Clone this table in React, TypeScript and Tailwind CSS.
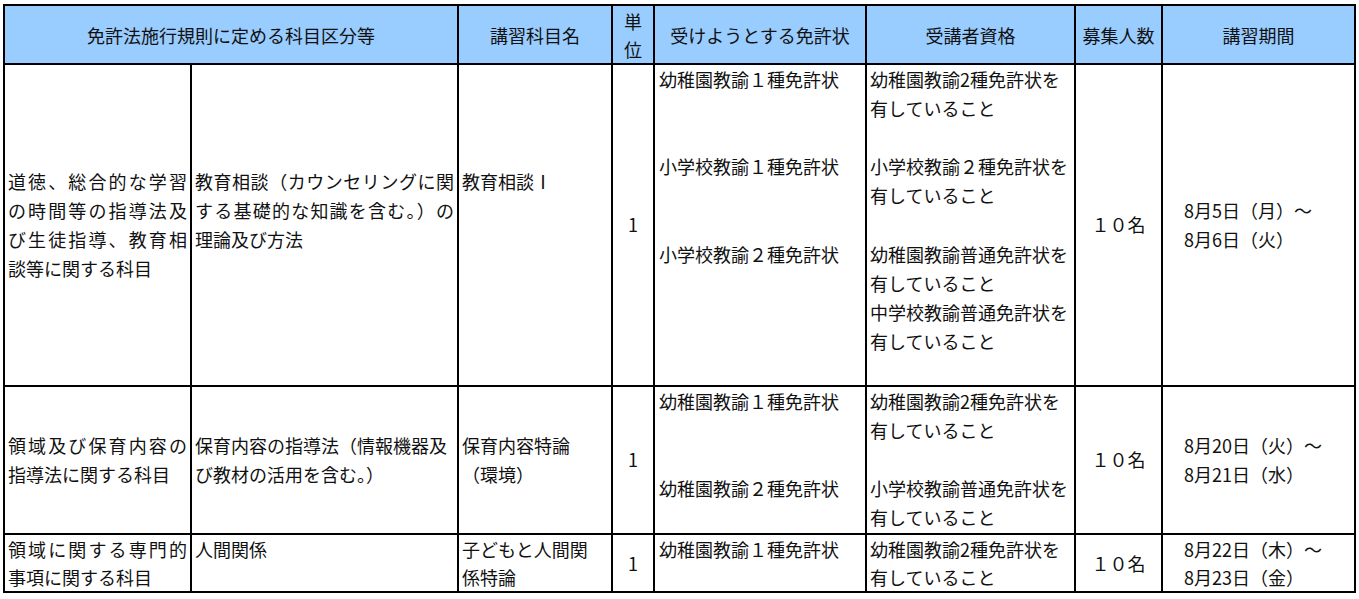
import React from "react";

type Line = { t: string; j?: boolean };

// one text line per entry; "" gives an empty line, j spreads the line to the cell width
function Lines({ lines }: { lines: Line[] }) {
  return (
    <>
      {lines.map((l, i) => (
        <div
          key={i}
          className={l.j ? "text-justify [text-align-last:justify]" : ""}
        >
          {l.t === "" ? "\u00a0" : l.t}
        </div>
      ))}
    </>
  );
}

const th =
  "border-2 border-black bg-[#99ccff] font-normal text-center align-middle leading-[28px] px-[2px]";
const td = "border-2 border-black px-[3px]";
const top = td + " align-top";
const mid = td + " align-middle";

export default function App() {
  return (
    <div
      lang="ja"
      className="bg-white w-[1359px] h-[599px] pt-[4px] pl-[3px] font-['Noto_Sans_CJK_JP',sans-serif] text-[18px] text-[#111] leading-[29.1px]"
    >
      <table className="table-fixed border-collapse w-[1351px]">
        <colgroup>
          <col className="w-[187px]" />
          <col className="w-[267px]" />
          <col className="w-[154px]" />
          <col className="w-[42px]" />
          <col className="w-[212px]" />
          <col className="w-[209px]" />
          <col className="w-[87px]" />
          <col className="w-[193px]" />
        </colgroup>
        <thead>
          <tr className="h-[59px]">
            <th colSpan={2} className={th}>
              免許法施行規則に定める科目区分等
            </th>
            <th className={th}>講習科目名</th>
            <th className={th}>
              単<br />位
            </th>
            <th className={th}>受けようとする免許状</th>
            <th className={th}>受講者資格</th>
            <th className={th}>募集人数</th>
            <th className={th}>講習期間</th>
          </tr>
        </thead>
        <tbody>
          {/* 教育相談 */}
          <tr className="h-[322px]">
            <td className={mid}>
              <Lines
                lines={[
                  { t: "道徳、総合的な学習", j: true },
                  { t: "の時間等の指導法及", j: true },
                  { t: "び生徒指導、教育相", j: true },
                  { t: "談等に関する科目" },
                ]}
              />
            </td>
            <td className={top + " pt-[102px]"}>
              <Lines
                lines={[
                  { t: "教育相談（カウンセリングに関", j: true },
                  { t: "する基礎的な知識を含む。）の", j: true },
                  { t: "理論及び方法" },
                ]}
              />
            </td>
            <td className={top + " pt-[102px]"}>教育相談Ⅰ</td>
            <td className={mid + " text-center"}>1</td>
            <td className={top + " pl-[4px]"}>
              <Lines
                lines={[
                  { t: "幼稚園教諭１種免許状" },
                  { t: "" },
                  { t: "" },
                  { t: "小学校教諭１種免許状" },
                  { t: "" },
                  { t: "" },
                  { t: "小学校教諭２種免許状" },
                ]}
              />
            </td>
            <td className={top}>
              <Lines
                lines={[
                  { t: "幼稚園教諭2種免許状を" },
                  { t: "有していること" },
                  { t: "" },
                  { t: "小学校教諭２種免許状を" },
                  { t: "有していること" },
                  { t: "" },
                  { t: "幼稚園教諭普通免許状を" },
                  { t: "有していること" },
                  { t: "中学校教諭普通免許状を" },
                  { t: "有していること" },
                  { t: "" },
                ]}
              />
            </td>
            <td className={mid + " text-center"}>１０名</td>
            <td className={mid + " pl-[21px]"}>
              <Lines lines={[{ t: "8月5日（月）～" }, { t: "8月6日（火）" }]} />
            </td>
          </tr>

          {/* 保育内容特論 */}
          <tr className="h-[148px]">
            <td className={mid}>
              <Lines
                lines={[
                  { t: "領域及び保育内容の", j: true },
                  { t: "指導法に関する科目" },
                ]}
              />
            </td>
            <td className={mid}>
              <Lines
                lines={[
                  { t: "保育内容の指導法（情報機器及" },
                  { t: "び教材の活用を含む。）" },
                ]}
              />
            </td>
            <td className={mid}>
              <Lines lines={[{ t: "保育内容特論" }, { t: "（環境）" }]} />
            </td>
            <td className={mid + " text-center"}>1</td>
            <td className={top + " pl-[4px]"}>
              <Lines
                lines={[
                  { t: "幼稚園教諭１種免許状" },
                  { t: "" },
                  { t: "" },
                  { t: "幼稚園教諭２種免許状" },
                ]}
              />
            </td>
            <td className={top}>
              <Lines
                lines={[
                  { t: "幼稚園教諭2種免許状を" },
                  { t: "有していること" },
                  { t: "" },
                  { t: "小学校教諭普通免許状を" },
                  { t: "有していること" },
                ]}
              />
            </td>
            <td className={mid + " text-center"}>１０名</td>
            <td className={mid + " pl-[21px]"}>
              <Lines
                lines={[{ t: "8月20日（火）～" }, { t: "8月21日（水）" }]}
              />
            </td>
          </tr>

          {/* 子どもと人間関係特論 */}
          <tr className="h-[58px] leading-[28px]">
            <td className={top}>
              <Lines
                lines={[
                  { t: "領域に関する専門的", j: true },
                  { t: "事項に関する科目" },
                ]}
              />
            </td>
            <td className={top}>人間関係</td>
            <td className={top}>
              <Lines lines={[{ t: "子どもと人間関" }, { t: "係特論" }]} />
            </td>
            <td className={mid + " text-center"}>1</td>
            <td className={top + " pl-[4px]"}>幼稚園教諭１種免許状</td>
            <td className={top}>
              <Lines
                lines={[{ t: "幼稚園教諭2種免許状を" }, { t: "有していること" }]}
              />
            </td>
            <td className={mid + " text-center"}>１０名</td>
            <td className={mid + " pl-[21px]"}>
              <Lines
                lines={[{ t: "8月22日（木）～" }, { t: "8月23日（金）" }]}
              />
            </td>
          </tr>
        </tbody>
      </table>
    </div>
  );
}
